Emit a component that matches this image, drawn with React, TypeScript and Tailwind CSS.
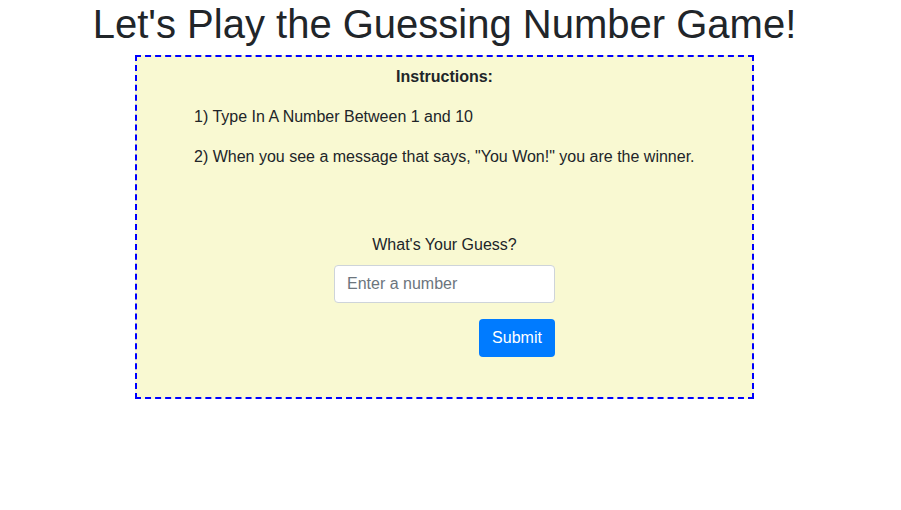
export default function App() {
  return (
    <div className="w-[889px] text-[#212529]" style={{ fontFamily: '"Liberation Sans", Arial, sans-serif' }}>
      <h1 className="text-center text-[40px] leading-[48px] mb-[7px] font-normal">Let's Play the Guessing Number Game!</h1>
      <div className="mx-auto w-[619px] border-2 border-dashed border-[#0000ff] bg-[#f9f9d2] pt-[8px] pb-[40px]">
        <div className="text-center font-bold text-base leading-6">Instructions:</div>
        <div className="pl-[57px] mt-4 text-base leading-6">
          <p>1) Type In A Number Between 1 and 10</p>
          <p className="mt-4">2) When you see a message that says, "You Won!" you are the winner.</p>
        </div>
        <div className="mt-16 text-center text-base leading-6">What's Your Guess?</div>
        <div className="mx-auto w-[221px] mt-[8px] flex flex-col items-end">
          <input
            type="text"
            placeholder="Enter a number"
            className="w-[221px] h-[38px] rounded-[4px] border border-[#ced4da] bg-white px-3 text-base text-[#495057] placeholder:text-[#6c757d] outline-none"
          />
          <button className="mt-4 h-[38px] w-[76px] rounded-[4px] bg-[#007bff] text-white text-base">Submit</button>
        </div>
      </div>
    </div>
  );
}
